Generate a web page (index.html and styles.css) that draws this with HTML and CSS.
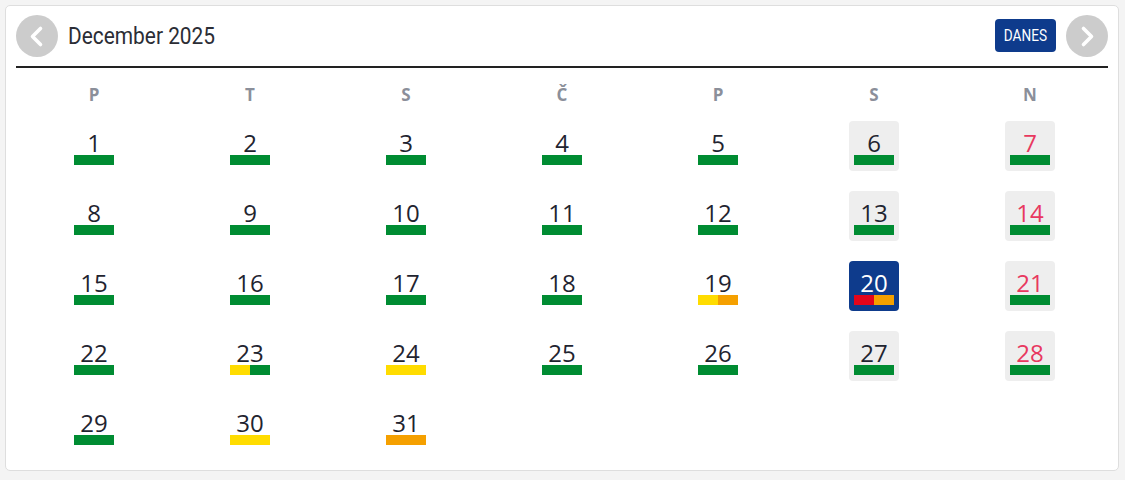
FILE: index.html
```html
<!DOCTYPE html>
<html lang="sl">
<head>
<meta charset="utf-8">
<title>Koledar</title>
<link rel="stylesheet" href="styles.css">
</head>
<body>
<div class="card">
  <div class="header">
    <button class="nav" aria-label="Prejšnji mesec">
      <svg width="42" height="42" viewBox="0 0 42 42"><circle cx="21" cy="21" r="21" fill="#cccccc"/><path d="M24.5 13.5 L16.5 21.5 L24.5 29.5" fill="none" stroke="#fff" stroke-width="3.6" stroke-linecap="round" stroke-linejoin="round"/></svg>
    </button>
    <div class="title"><span>December 2025</span></div>
    <button class="today"><span>DANES</span></button>
    <button class="nav" aria-label="Naslednji mesec">
      <svg width="42" height="42" viewBox="0 0 42 42"><circle cx="21" cy="21" r="21" fill="#cccccc"/><path d="M17.5 13.5 L25.5 21.5 L17.5 29.5" fill="none" stroke="#fff" stroke-width="3.6" stroke-linecap="round" stroke-linejoin="round"/></svg>
    </button>
  </div>
  <div class="weekdays">
    <div>P</div><div>T</div><div>S</div><div>Č</div><div>P</div><div>S</div><div>N</div>
  </div>
  <div class="days">
    <div class="day"><span class="num">1</span><span class="bar"><i class="g"></i><i class="g"></i></span></div>
    <div class="day"><span class="num">2</span><span class="bar"><i class="g"></i><i class="g"></i></span></div>
    <div class="day"><span class="num">3</span><span class="bar"><i class="g"></i><i class="g"></i></span></div>
    <div class="day"><span class="num">4</span><span class="bar"><i class="g"></i><i class="g"></i></span></div>
    <div class="day"><span class="num">5</span><span class="bar"><i class="g"></i><i class="g"></i></span></div>
    <div class="day sat"><span class="num">6</span><span class="bar"><i class="g"></i><i class="g"></i></span></div>
    <div class="day sun"><span class="num">7</span><span class="bar"><i class="g"></i><i class="g"></i></span></div>

    <div class="day"><span class="num">8</span><span class="bar"><i class="g"></i><i class="g"></i></span></div>
    <div class="day"><span class="num">9</span><span class="bar"><i class="g"></i><i class="g"></i></span></div>
    <div class="day"><span class="num">10</span><span class="bar"><i class="g"></i><i class="g"></i></span></div>
    <div class="day"><span class="num">11</span><span class="bar"><i class="g"></i><i class="g"></i></span></div>
    <div class="day"><span class="num">12</span><span class="bar"><i class="g"></i><i class="g"></i></span></div>
    <div class="day sat"><span class="num">13</span><span class="bar"><i class="g"></i><i class="g"></i></span></div>
    <div class="day sun"><span class="num">14</span><span class="bar"><i class="g"></i><i class="g"></i></span></div>

    <div class="day"><span class="num">15</span><span class="bar"><i class="g"></i><i class="g"></i></span></div>
    <div class="day"><span class="num">16</span><span class="bar"><i class="g"></i><i class="g"></i></span></div>
    <div class="day"><span class="num">17</span><span class="bar"><i class="g"></i><i class="g"></i></span></div>
    <div class="day"><span class="num">18</span><span class="bar"><i class="g"></i><i class="g"></i></span></div>
    <div class="day"><span class="num">19</span><span class="bar"><i class="y"></i><i class="o"></i></span></div>
    <div class="day sat current"><span class="num">20</span><span class="bar"><i class="r"></i><i class="o"></i></span></div>
    <div class="day sun"><span class="num">21</span><span class="bar"><i class="g"></i><i class="g"></i></span></div>

    <div class="day"><span class="num">22</span><span class="bar"><i class="g"></i><i class="g"></i></span></div>
    <div class="day"><span class="num">23</span><span class="bar"><i class="y"></i><i class="g"></i></span></div>
    <div class="day"><span class="num">24</span><span class="bar"><i class="y"></i><i class="y"></i></span></div>
    <div class="day"><span class="num">25</span><span class="bar"><i class="g"></i><i class="g"></i></span></div>
    <div class="day"><span class="num">26</span><span class="bar"><i class="g"></i><i class="g"></i></span></div>
    <div class="day sat"><span class="num">27</span><span class="bar"><i class="g"></i><i class="g"></i></span></div>
    <div class="day sun"><span class="num">28</span><span class="bar"><i class="g"></i><i class="g"></i></span></div>

    <div class="day"><span class="num">29</span><span class="bar"><i class="g"></i><i class="g"></i></span></div>
    <div class="day"><span class="num">30</span><span class="bar"><i class="y"></i><i class="y"></i></span></div>
    <div class="day"><span class="num">31</span><span class="bar"><i class="o"></i><i class="o"></i></span></div>
  </div>
</div>
</body>
</html>
```
FILE: styles.css
```css
html, body {
  margin: 0;
  padding: 0;
}
body {
  background: #f4f4f4;
  padding: 5px 6px 9px 5px;
  font-family: "Open Sans", "Liberation Sans", sans-serif;
}
.card {
  background: #ffffff;
  border: 1px solid #dedede;
  border-radius: 5px;
  padding: 9px 10px 19px 10px;
  box-sizing: border-box;
  height: 466px;
}
.header {
  display: flex;
  align-items: center;
  height: 42px;
  padding-bottom: 9px;
  border-bottom: 2px solid #222222;
}
.nav {
  width: 42px;
  height: 42px;
  padding: 0;
  margin: 0;
  border: 0;
  background: none;
  display: block;
}
.nav svg {
  display: block;
}
.title {
  flex: 1;
  margin-left: 10px;
  font-family: Roboto, "Liberation Sans", sans-serif;
  font-size: 24px;
  color: #2b2d35;
  line-height: 42px;
}
.title span {
  display: inline-block;
  transform: scaleX(0.87);
  transform-origin: left center;
}
.today {
  height: 33px;
  width: 61px;
  margin-right: 10px;
  margin-top: -2px;
  padding: 0;
  border: 0;
  border-radius: 4px;
  background: #0e3b8c;
  color: #ffffff;
  font-family: Roboto, "Liberation Sans", sans-serif;
  font-size: 16px;
}
.today span {
  display: inline-block;
  transform: scaleX(0.85);
}
.weekdays {
  display: grid;
  grid-template-columns: repeat(7, 156px);
  padding-top: 10px;
  margin-bottom: 9px;
}
.weekdays div {
  text-align: center;
  line-height: 34px;
  font-weight: 700;
  font-size: 17px;
  color: #8b8f9a;
}
.days {
  display: grid;
  grid-template-columns: repeat(7, 156px);
  grid-auto-rows: 50px;
  row-gap: 20px;
  justify-items: center;
}
.day {
  width: 50px;
  height: 50px;
  box-sizing: border-box;
  padding-top: 10px;
  border-radius: 4px;
  display: flex;
  flex-direction: column;
  align-items: center;
}
.num {
  font-size: 24px;
  line-height: 24px;
  color: #1f2430;
}
.bar {
  display: flex;
  width: 40px;
  height: 10px;
}
.bar i {
  flex: 1;
  display: block;
}
.g { background: #008c32; }
.y { background: #ffdc00; }
.o { background: #f5a000; }
.r { background: #e3051b; }
.sat, .sun {
  background: #eeeeee;
}
.sun .num {
  color: #e8385f;
}
.current {
  background: #0e3b8c;
}
.current .num {
  color: #ffffff;
}
```
